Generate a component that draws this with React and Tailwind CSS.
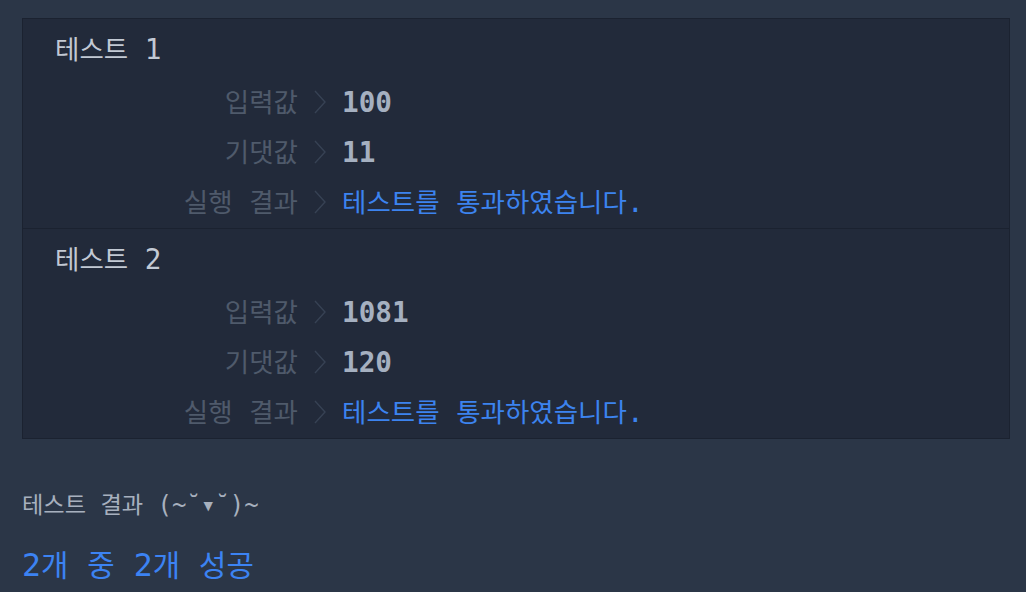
import React from 'react';

// Hangul runs keep the CJK font, everything else goes to the mono font
const Mixed = ({ text, mono }) => {
  const parts = text.split(/([\uAC00-\uD7A3]+)/).filter(Boolean);
  return (
    <>
      {parts.map((p, i) =>
        /[\uAC00-\uD7A3]/.test(p) ? (
          <span key={i}>{p}</span>
        ) : (
          <span key={i} className={`font-['DejaVu_Sans_Mono',monospace] whitespace-pre ${mono}`}>
            {p}
          </span>
        )
      )}
    </>
  );
};

const Chevron = () => (
  <svg width="12" height="24" viewBox="0 0 12 24" className="text-[#374254]">
    <polyline points="1,1 11,12 1,23" fill="none" stroke="currentColor" strokeWidth="1.4" />
  </svg>
);

const Row = ({ label, value, pass }) => (
  <div className="flex items-baseline h-[50px] leading-[48px]">
    <div className="w-[275px] text-right text-[#4f5a6b]">
      <Mixed text={label} mono="text-[27.7px]" />
    </div>
    <div className="w-[44px] self-center flex justify-center">
      <Chevron />
    </div>
    <div className={pass ? 'text-[#3c83ef]' : 'text-[#a5b0c0] font-bold'}>
      <Mixed text={value} mono="text-[27.7px]" />
    </div>
  </div>
);

const TestCase = ({ n, input, expected, first }) => (
  <div className={`pt-[4px] pb-[1px] ${first ? '' : 'border-t border-[#1b2230]'}`}>
    <div className="h-[50px] leading-[50px] pl-[32px] text-[#c2c9d4]">
      <Mixed text={`테스트 ${n}`} mono="text-[27.7px]" />
    </div>
    <div className="mt-1">
      <Row label="입력값" value={input} />
      <Row label="기댓값" value={expected} />
      <Row label="실행 결과" value="테스트를 통과하였습니다." pass />
    </div>
  </div>
);

export default function App() {
  const tests = [
    { n: 1, input: '100', expected: '11' },
    { n: 2, input: '1081', expected: '120' },
  ];

  return (
    <div className="min-h-screen bg-[#2b3647] pt-[18px] pl-[22px] pr-[16px] font-['Noto_Sans_CJK_KR',sans-serif] text-[26.5px]">
      <div className="bg-[#222a3a] border border-[#1b2230]">
        {tests.map((t, i) => (
          <TestCase key={t.n} {...t} first={i === 0} />
        ))}
      </div>

      <div className="mt-[49px] h-[30px] leading-[30px] text-[23.2px] text-[#a7b0be]">
        <Mixed text="테스트 결과 (~˘▾˘)~" mono="text-[24px]" />
      </div>
      <div className="mt-[25px] h-[40px] leading-[40px] text-[29.8px] text-[#3c83f3]">
        <Mixed text="2개 중 2개 성공" mono="text-[31.5px]" />
      </div>
    </div>
  );
}
